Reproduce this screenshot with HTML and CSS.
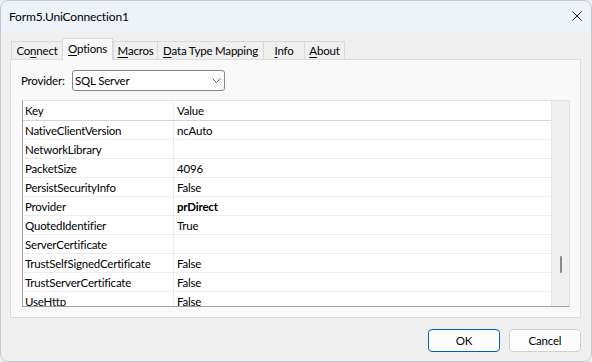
FILE: index.html
```html
<!DOCTYPE html>
<html>
<head>
<meta charset="utf-8">
<title>Form5.UniConnection1</title>
<link rel="stylesheet" href="styles.css">
</head>
<body>
<div class="window">
  <div class="titlebar">
    <span class="title">Form5.UniConnection1</span>
    <span class="close"><svg width="10" height="10" viewBox="0 0 10 10"><path d="M0.5 0.5L9.5 9.5M9.5 0.5L0.5 9.5" stroke="#1b1b1b" stroke-width="1" fill="none"/></svg></span>
  </div>
  <div class="client">
    <div class="tabs">
      <div class="tab w-connect">Co<u>n</u>nect</div>
      <div class="tab active w-options"><u>O</u>ptions</div>
      <div class="tab w-macros"><u>M</u>acros</div>
      <div class="tab w-dtm"><u>D</u>ata Type Mapping</div>
      <div class="tab w-info"><u>I</u>nfo</div>
      <div class="tab last w-about"><u>A</u>bout</div>
    </div>
    <div class="page">
      <div class="provider-row">
        <span class="lbl">Provider:</span>
        <div class="combo">
          <span>SQL Server</span>
          <svg class="chev" width="9" height="5" viewBox="0 0 9 5"><path d="M0.5 0.5L4.5 4.5L8.5 0.5" stroke="#606060" stroke-width="1" fill="none"/></svg>
        </div>
      </div>
      <div class="grid">
        <div class="grid-body">
          <div class="row head"><div class="c key">Key</div><div class="c val">Value</div></div>
          <div class="row"><div class="c key">NativeClientVersion</div><div class="c val">ncAuto</div></div>
          <div class="row"><div class="c key">NetworkLibrary</div><div class="c val"></div></div>
          <div class="row"><div class="c key">PacketSize</div><div class="c val">4096</div></div>
          <div class="row"><div class="c key">PersistSecurityInfo</div><div class="c val">False</div></div>
          <div class="row"><div class="c key">Provider</div><div class="c val bold">prDirect</div></div>
          <div class="row"><div class="c key">QuotedIdentifier</div><div class="c val">True</div></div>
          <div class="row"><div class="c key">ServerCertificate</div><div class="c val"></div></div>
          <div class="row"><div class="c key">TrustSelfSignedCertificate</div><div class="c val">False</div></div>
          <div class="row"><div class="c key">TrustServerCertificate</div><div class="c val">False</div></div>
          <div class="row"><div class="c key">UseHttp</div><div class="c val">False</div></div>
        </div>
        <div class="vscroll"><div class="thumb"></div></div>
      </div>
    </div>
    <div class="buttons">
      <button class="btn default">OK</button>
      <button class="btn">Cancel</button>
    </div>
  </div>
</div>
</body>
</html>
```
FILE: styles.css
```css
html, body {
  margin: 0;
  padding: 0;
  background: #f0f0f0;
}
body {
  font-family: "Lato", "Noto Sans", sans-serif;
  font-size: 11.5px;
  letter-spacing: -0.2px;
  color: #000;
}
.window {
  width: 592px;
  height: 362px;
  box-sizing: border-box;
  border: 1px solid #c6c9cf;
  border-radius: 8px;
  background: #f0f0f0;
  overflow: hidden;
}
.titlebar {
  height: 30px;
  background: #eef2f9;
  display: flex;
  align-items: center;
  justify-content: space-between;
  padding: 0 9px 0 8px;
}
.title {
  font-size: 12px;
  letter-spacing: -0.15px;
}
.close {
  display: flex;
  width: 10px;
  height: 10px;
}
.client {
  padding: 7px 10px 0 9px;
}
.tabs {
  display: flex;
  align-items: flex-end;
  height: 21px;
  padding-left: 1px;
}
.tab {
  height: 18px;
  box-sizing: border-box;
  border-top: 1px solid #d9d9d9;
  border-left: 1px solid #d9d9d9;
  background: #f0f0f0;
  display: flex;
  align-items: center;
  justify-content: center;
  white-space: nowrap;
}
.tab.last {
  border-right: 1px solid #d9d9d9;
}
.tab.active {
  height: 22px;
  margin-bottom: -1px;
  position: relative;
  z-index: 1;
  background: #f9f9f9;
  border-right: 1px solid #d9d9d9;
  padding-bottom: 3px;
}
.tab u {
  text-decoration-thickness: 1px;
  text-underline-offset: 2px;
}
.w-connect { width: 51px; }
.w-options { width: 51px; }
.w-macros { width: 44px; }
.w-dtm { width: 106px; }
.w-info { width: 41px; }
.w-about { width: 41px; }
.page {
  height: 259px;
  box-sizing: border-box;
  border: 1px solid #dcdcdc;
  background: #f9f9f9;
  padding: 10px 10px 0 10px;
}
.provider-row {
  display: flex;
  align-items: center;
  height: 21px;
}
.lbl {
  width: 51px;
}
.combo {
  width: 153px;
  height: 21px;
  box-sizing: border-box;
  border: 1px solid #868686;
  border-radius: 3px;
  background: #fefefe;
  display: flex;
  align-items: center;
  justify-content: space-between;
  padding: 0 3px 0 2px;
}
.chev {
  display: block;
}
.grid {
  margin-top: 9px;
  margin-left: 1px;
  width: 548px;
  height: 207px;
  box-sizing: border-box;
  border-style: solid;
  border-width: 1px;
  border-color: #e3e3e3 #e3e3e3 #a0a0a0 #a0a0a0;
  background: #fff;
  display: flex;
  overflow: hidden;
}
.grid-body {
  flex: 1;
  overflow: hidden;
}
.row {
  display: flex;
  height: 19px;
  box-sizing: border-box;
  border-bottom: 1px solid #ededed;
}
.row.head {
  height: 20px;
  border-bottom: 1px solid #d4d4d4;
}
.c {
  height: 100%;
  display: flex;
  align-items: center;
  box-sizing: border-box;
  white-space: nowrap;
}
.key {
  width: 151px;
  border-right: 1px solid #ebebeb;
  padding-left: 2px;
}
.val {
  flex: 1;
  padding-left: 3px;
}
.bold {
  font-weight: bold;
}
.vscroll {
  width: 17px;
  border-left: 1px solid #e6e6e6;
  background: #f0f0f0;
  flex: none;
}
.thumb {
  width: 2px;
  height: 17px;
  margin: 155px auto 0;
  background: #8a8a8a;
  border-radius: 1px;
}
.buttons {
  display: flex;
  justify-content: flex-end;
  gap: 9px;
  margin-top: 11px;
}
.btn {
  width: 72px;
  height: 23px;
  box-sizing: border-box;
  border: 1px solid #d0d0d0;
  border-radius: 4px;
  background: #fdfdfd;
  font: inherit;
  letter-spacing: inherit;
  color: #000;
  padding: 0;
  display: flex;
  align-items: center;
  justify-content: center;
}
.btn.default {
  border-color: #005fb8;
}
```
